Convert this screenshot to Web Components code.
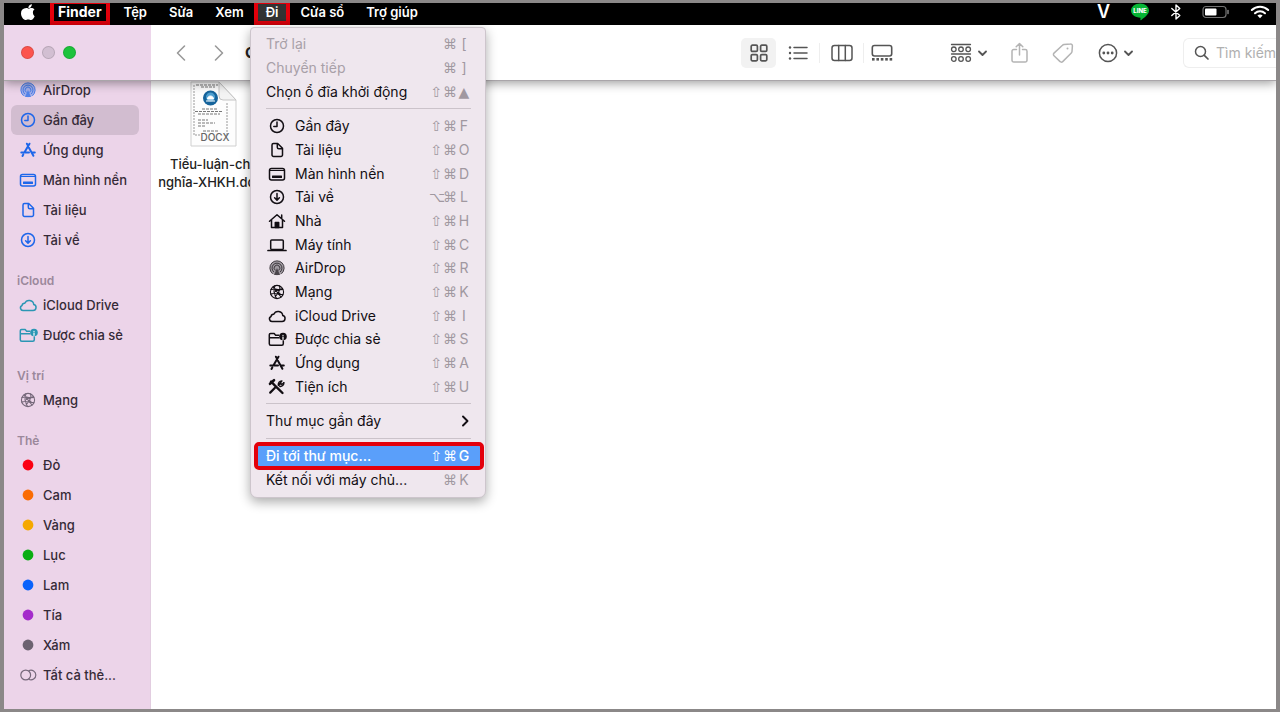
<!DOCTYPE html>
<html lang="vi">
<head>
<meta charset="utf-8">
<title>Finder</title>
<style>
body {
  margin: 0;
  font: 14px/18px Inter, "Noto Sans", sans-serif;
}
</style>
</head>
<body>
<finder-app></finder-app>

<script>
// every glyph is [width, height, markup], drawn with currentColor
const ICONS = {
    clock: [22, 18, '<circle cx="11" cy="9" r="6.500"/><path d="M11 5v4.500H7.800"/>'],
    doc: [22, 18, '<path d="M7.500 2.500h4.200l4.800 4.800v6.700a1.500 1.500 0 0 1-1.500 1.500H7.500A1.500 1.500 0 0 1 6 14V4a1.500 1.500 0 0 1 1.500-1.500zM11.300 2.700v3.500a1.500 1.500 0 0 0 1.500 1.500h3.500"/>'],
    desktop: [22, 18, '<rect x="3.500" y="3.500" width="15" height="11.500" rx="2"/><path d="M4 5.500h14" stroke-width="1"/><rect x="6" y="10.500" width="10" height="2.500" rx=".5" fill="currentColor" stroke="none"/>'],
    download: [22, 18, '<circle cx="11" cy="9" r="6.500"/><path d="M11 5.500v6.500M8.600 9.700L11 12.100l2.400-2.400"/>'],
    house: [22, 18, '<path d="M3.500 9.200L11 2.700l7.500 6.500M5.500 8v7.500h11V8M15.700 3v3.500"/><path d="M9.300 15.500v-5h3.400v5z" fill="currentColor"/>'],
    laptop: [22, 18, '<rect x="4.700" y="4" width="12.600" height="9.500" rx="1"/><path d="M2 14.500h18" stroke-width="1.700"/>'],
    airdrop: [22, 18, '<circle cx="11" cy="9" r="7.300" fill="currentColor" fill-opacity=".35" stroke="none"/><g stroke-width="1" stroke-opacity=".7"><path d="M6.200 14.400a7.200 7.200 0 1 1 9.600 0"/><path d="M7.600 12.800a5 5 0 1 1 6.800 0"/><path d="M9.100 11.200a2.900 2.900 0 1 1 3.800 0"/></g><path d="M11 9l3 7H8z" fill="currentColor" fill-opacity=".6" stroke="none"/>'],
    globe: [22, 18, '<g stroke-width="1.100"><circle cx="11" cy="9" r="6.600"/><path d="M5 6.500c3-1 6 .5 11.800 0M4.700 11c4-1.500 8 .500 12 .500M9 2.800c-2 4-.5 9 1.500 12.600M13.500 3c1.500 3-1 7-4.500 11M7 4l8 10M16.500 5.500l-7 3"/></g><circle cx="9.500" cy="6.500" r="1.100" fill="currentColor" stroke="none"/><circle cx="13.200" cy="10.800" r="1.200" fill="currentColor" stroke="none"/>'],
    cloud: [22, 18, '<path d="M6.300 14.500h9.700a3 3 0 0 0 .8-5.900 4.700 4.700 0 0 0-9-1.300 2.500 2.500 0 0 0-2.700 2.200 2.600 2.600 0 0 0 1.200 5z"/>'],
    shared: [22, 18, '<path d="M12.800 5.200H9.600L8.200 3.600H4.500A1.200 1.200 0 0 0 3.300 4.800v8.900a1.500 1.500 0 0 0 1.500 1.500h11a1.500 1.500 0 0 0 1.500-1.500v-2.600M3.500 7.700h9.300"/><circle cx="17" cy="6.500" r="3.800" fill="currentColor" stroke="none"/><path d="M17 5.400v.2M17 7v2.300" stroke="#fff" stroke-width="1.200"/>'],
    apps: [22, 18, '<g stroke-width="2"><path d="M9.900 2.700l1.300 2.300M12.500 2.700L7.500 11.300M11.900 6.800l4.500 8M4.300 11.600h7.700M14.900 11.600h2.900M6.300 13.600l-.8 1.400"/></g>'],
    tools: [22, 18, '<path d="M9 9.800l-4.800 4.800M12.700 7l1.500-1.600" stroke-width="2.200"/><path d="M17.800 4.700l-2 1.800-1.500-1.500 1.700-2.100a3.400 3.400 0 0 0-3.500 4.500" stroke-width="1.300"/><path d="M5 3.500L9 7.700l7.500 7.300" stroke-width="2.400"/><path d="M4 5.800l4-3.600" stroke-width="2.600"/><path d="M17.800 4.700a3.400 3.400 0 0 1-4 3.700"/>'],
    tags: [22, 18, '<g stroke-width="1.200"><circle cx="8.700" cy="9" r="4.900"/><path d="M12 4.500a4.900 4.900 0 1 1 0 9"/></g>'],
    dot: [22, 18, '<circle cx="11" cy="9" r="5.400" fill="currentColor" stroke="none"/>'],

    back: [12, 18, '<path d="M9.500 2L2.500 9l7 7" stroke-width="1.600"/>'],
    forward: [12, 18, '<path d="M2.500 2l7 7-7 7" stroke-width="1.600"/>'],
    more: [8, 12, '<path d="M2 1.500L6.500 6 2 10.500" stroke-width="1.900"/>'],
    down: [9, 18, '<path d="M1 7.500l3.500 3.500L8 7.500" stroke-width="1.800"/>'],
    grid: [18, 18, '<g stroke-width="1.700"><rect x="1.200" y="1.200" width="6.200" height="6.200" rx="1.200"/><rect x="10.600" y="1.200" width="6.200" height="6.200" rx="1.200"/><rect x="1.200" y="10.600" width="6.200" height="6.200" rx="1.200"/><rect x="10.600" y="10.600" width="6.200" height="6.200" rx="1.200"/></g>'],
    list: [20, 18, '<path d="M6 3.500h13M6 9h13M6 14.500h13" stroke-width="1.500"/><g fill="currentColor" stroke="none"><circle cx="2" cy="3.500" r="1.200"/><circle cx="2" cy="9" r="1.200"/><circle cx="2" cy="14.500" r="1.200"/></g>'],
    columns: [22, 18, '<rect x="1" y="1.500" width="20" height="15" rx="2.500"/><path d="M7.700 1.500v15M14.300 1.500v15"/>'],
    gallery: [22, 18, '<rect x="1.300" y="1.500" width="19.400" height="10.500" rx="2.200" stroke-width="1.600"/><g fill="currentColor" stroke="none"><rect x="1" y="14" width="2.600" height="2.600"/><rect x="5.400" y="14" width="2.600" height="2.600"/><rect x="9.800" y="14" width="2.600" height="2.600"/><rect x="14.200" y="14" width="2.600" height="2.600"/><rect x="18.600" y="14" width="2.600" height="2.600"/></g>'],
    group: [22, 20, '<g stroke-width="1.300"><path d="M1.500 1.500h19M1.500 11h19" stroke-width="1.300"/><circle cx="3.800" cy="6.300" r="2.300"/><circle cx="11" cy="6.300" r="2.300"/><circle cx="18.200" cy="6.300" r="2.300"/><circle cx="3.800" cy="16" r="2.300"/><circle cx="11" cy="16" r="2.300"/><circle cx="18.200" cy="16" r="2.300"/></g>'],
    share: [17, 22, '<path d="M5.500 7.500H2.700A1.700 1.700 0 0 0 1 9.200v9.100A1.700 1.700 0 0 0 2.700 20h11.600a1.700 1.700 0 0 0 1.700-1.700V9.200a1.700 1.700 0 0 0-1.700-1.700h-2.800M8.500 13V1.500M5.200 4.800l3.300-3.300 3.300 3.300"/>'],
    tag: [22, 22, '<path d="M12 2.600l6.400-.6a1.800 1.800 0 0 1 2 2L20 9.500a2.400 2.400 0 0 1-.7 1.500l-8.600 8.600a1.800 1.800 0 0 1-2.600 0L2 13.700a1.800 1.800 0 0 1 0-2.600l8.500-7.800A2.400 2.400 0 0 1 12 2.600z"/><circle cx="15.500" cy="6.500" r="1" fill="currentColor" stroke="none"/>'],
    ellipsis: [20, 20, '<circle cx="10" cy="10" r="8.600"/><g fill="currentColor" stroke="none"><circle cx="5.800" cy="10" r="1.400"/><circle cx="10" cy="10" r="1.400"/><circle cx="14.200" cy="10" r="1.400"/></g>'],
    search: [16, 16, '<circle cx="6.500" cy="6.500" r="5" stroke-width="1.500"/><path d="M10.300 10.300l3.700 3.700" stroke-width="1.700"/>'],

    apple: [16, 18, '<g fill="currentColor" stroke="none"><path d="M12.900 9.400c0-1.800 1.400-2.700 1.600-2.800-.9-1.300-2.300-1.500-2.800-1.500-1.200-.1-2.300.7-2.900.7s-1.500-.7-2.500-.7C3 5.200 1 7 1 10.300c0 3.200 2.300 6.700 4.400 6.700 1 0 1.500-.6 2.800-.6s1.700.6 2.800.6c1.600 0 3-2.200 3.700-4-.1 0-1.800-.8-1.800-3.600z"/><path d="M10.900 3.900c.6-.7 1-1.700.9-2.700-.9 0-1.900.6-2.500 1.300-.6.6-1 1.600-.9 2.500 1 .1 1.900-.5 2.500-1.100z"/></g>'],
    line: [20, 18, '<path d="M10 .5c5 0 9 3.200 9 7.100 0 3.700-4 6.600-7.600 9.300-.9.600-1.100.5-1-.4l.1-1.700C5 14.800 1 11.500 1 7.600S5 .5 10 .5z" fill="#06b535" stroke="none"/><text x="10" y="10" text-anchor="middle" fill="#fff" stroke="none" font-family="Inter, sans-serif" font-size="6" font-weight="800">LINE</text>'],
    bluetooth: [12, 18, '<path d="M1.800 5.500l8 7L6 16V2l3.800 3.500-8 7" stroke-width="1.400"/>'],
    battery: [28, 14, '<rect x="1" y="1.500" width="23" height="11" rx="3" stroke-opacity=".45" stroke-width="1.200"/><rect x="3" y="3.500" width="11.500" height="7" rx="1" fill="currentColor" stroke="none"/><path d="M26 5.500v3" stroke-opacity=".5"/>'],
    wifi: [20, 14, '<path d="M1.800 5a11.800 11.800 0 0 1 16.400 0M5 8.200a7.200 7.200 0 0 1 10 0" stroke-width="2"/><path d="M7.400 10.500a4 4 0 0 1 5.200 0L10 13.200z" fill="currentColor" stroke="none"/>'],
}

class Base extends HTMLElement {
    connectedCallback() {
        if (this.shadowRoot) return
        this.attachShadow({mode: 'open'}).innerHTML = this.render()
    }
    attr(name) { return this.getAttribute(name) || '' }
}

customElements.define('ui-icon', class extends Base {
    render() {
        let [w, h, body] = ICONS[this.attr('name')]
        return `
<style>
:host { display: block; flex: none; }
svg { display: block; }
</style>
<svg width="${w}" height="${h}" viewBox="0 0 ${w} ${h}" fill="none" stroke="currentColor"
  stroke-width="1.5" stroke-linecap="round" stroke-linejoin="round" aria-hidden="true">${body}</svg>`
    }
})

customElements.define('menu-bar', class extends Base {
    render() {
        let items = ['Finder', 'Tệp', 'Sửa', 'Xem', 'Đi', 'Cửa sổ', 'Trợ giúp']
        let marks = {'Finder': 'app marked', 'Đi': 'open marked'}
        return `
<style>
:host {
  display: flex;
  justify-content: space-between;
  height: 22px;
  padding: 0 6px 0 16px;
  background: #000;
  color: #fff;
}
nav, .status {
  display: flex;
  gap: 22px;
  height: 18px;
  align-items: center;
}
.status { gap: 20px; }
button {
  position: relative;
  padding: 0;
  border: 0;
  background: none;
  color: inherit;
  font: inherit;
  font-size: 13px;
  font-weight: 600;
  line-height: 18px;
}
.app { font-size: 14px; font-weight: 700; }
.marked::after {
  content: "";
  position: absolute;
  inset: 0 -8px -4px;
  border: solid #e3000b;
  border-width: 1px 4px 4px;
}
.open::after {
  inset: 0 -12px -4px;
  background: #fff3;
}
.v { font-size: 18px; font-weight: 600; }
</style>
<nav>
  <ui-icon name="apple"></ui-icon>
  ${items.map(t => `<button class="${marks[t] || ''}">${t}</button>`).join('')}
</nav>
<div class="status">
  <span class="v">V</span>
  <ui-icon name="line"></ui-icon>
  <ui-icon name="bluetooth"></ui-icon>
  <ui-icon name="battery"></ui-icon>
  <ui-icon name="wifi"></ui-icon>
</div>`
    }
})

customElements.define('menu-item', class extends Base {
    render() {
        let icon = this.attr('icon')
        let keys = [...this.attr('keys')]
        let kind = k => /[A-Z[\]]/.test(k) ? '' : 'sym'
        return `
<style>
:host { display: block; }
button {
  display: flex;
  align-items: center;
  width: 100%;
  height: 20px;
  padding: 0 9px 0 8px;
  border: 0;
  background: none;
  color: #120e13;
  font: inherit;
  text-align: left;
}
ui-icon { margin-right: 7px; }
.label { flex: 1; white-space: nowrap; }
.keys { display: flex; color: #a098a0; }
kbd {
  width: 14px;
  font: inherit;
  text-align: center;
}
.sym { font-family: "DejaVu Sans", sans-serif; }
.arrow { margin: 0 2px 0 0; }
:host([disabled]) button { color: #a8a0a8; }
:host([active]) button {
  background: #5a9ffa;
  color: #fff;
  font-weight: 500;
  outline: 4px solid #e3000b;
  border-radius: 1px;
}
:host([active]) .keys { color: #fff; }
</style>
<button role="menuitem" ${this.hasAttribute('disabled') ? 'disabled' : ''}>
  ${icon ? `<ui-icon name="${icon}"></ui-icon>` : ''}
  <span class="label"><slot></slot></span>
  ${this.hasAttribute('submenu') ? '<ui-icon class="arrow" name="more"></ui-icon>' : ''}
  <span class="keys">${keys.map(k => `<kbd class="${kind(k)}">${k}</kbd>`).join('')}</span>
</button>`
    }
})

customElements.define('go-menu', class extends Base {
    render() {
        let places = [
            ['clock', 'Gần đây', '⇧⌘F'],
            ['doc', 'Tài liệu', '⇧⌘O'],
            ['desktop', 'Màn hình nền', '⇧⌘D'],
            ['download', 'Tải về', '⌥⌘L'],
            ['house', 'Nhà', '⇧⌘H'],
            ['laptop', 'Máy tính', '⇧⌘C'],
            ['airdrop', 'AirDrop', '⇧⌘R'],
            ['globe', 'Mạng', '⇧⌘K'],
            ['cloud', 'iCloud Drive', '⇧⌘I'],
            ['shared', 'Được chia sẻ', '⇧⌘S'],
            ['apps', 'Ứng dụng', '⇧⌘A'],
            ['tools', 'Tiện ích', '⇧⌘U'],
        ]
        return `
<style>
:host {
  display: block;
  box-sizing: border-box;
  width: 236px;
  padding: 4px 5px 5px 7px;
  background: #efe7ee;
  border: 1px solid #cdc5cc;
  border-radius: 4px 4px 7px 7px;
  box-shadow: 0 4px 12px #0005;
}
section {
  display: grid;
  grid-auto-rows: 24px 24px 23px;
  align-items: center;
}
hr {
  margin: 5px 9px 5px 8px;
  border: 0;
  border-top: 1px solid #cbc3ca;
}
</style>
<section>
  <menu-item keys="⌘[" disabled>Trở lại</menu-item>
  <menu-item keys="⌘]" disabled>Chuyển tiếp</menu-item>
  <menu-item keys="⇧⌘▲">Chọn ổ đĩa khởi động</menu-item>
</section>
<hr>
<section>
  ${places.map(([i, t, k]) => `<menu-item icon="${i}" keys="${k}">${t}</menu-item>`).join('')}
</section>
<hr>
<section><menu-item submenu>Thư mục gần đây</menu-item></section>
<hr>
<section>
  <menu-item keys="⇧⌘G" active>Đi tới thư mục...</menu-item>
  <menu-item keys="⌘K">Kết nối với máy chủ...</menu-item>
</section>`
    }
})

customElements.define('finder-toolbar', class extends Base {
    render() {
        return `
<style>
:host {
  display: flex;
  align-items: center;
  position: relative;
  height: 55px;
  background: #fff;
  border-bottom: 1px solid #a9a5a9;
  box-shadow: 0 2px 10px #0006;
  color: #555;
}
button {
  display: flex;
  align-items: center;
  justify-content: center;
  gap: 6px;
  padding: 0;
  border: 0;
  background: none;
  color: inherit;
}
.lights {
  display: flex;
  align-items: center;
  gap: 8px;
  box-sizing: border-box;
  width: var(--side);
  height: 100%;
  padding-left: 17px;
  background: #edd6eb;
}
.lights button {
  width: 13px;
  height: 13px;
  border-radius: 50%;
  background: #d2bfd2;
  box-shadow: inset 0 0 0 1px #0002;
}
.lights .close { background: #fc544e; }
.lights .zoom { background: #1cc33c; }
.nav {
  display: flex;
  align-items: center;
  gap: 26px;
  padding-left: 24px;
  color: #9a9a9a;
}
h1 {
  margin: 0 auto 0 20px;
  color: #222;
  font-size: 15px;
  font-weight: 700;
}
.views {
  display: flex;
  align-items: center;
  gap: 4px;
  margin-right: 54px;
}
.views button { width: 35px; height: 30px; border-radius: 5px; }
.views .on { background: #f2f2f2; }
.views .last { width: 28px; }
.views i { width: 1px; height: 20px; background: #eee; }
.actions { display: flex; align-items: center; gap: 24px; }
.dim { color: #b4b4b4; }
.search {
  display: flex;
  align-items: center;
  gap: 6px;
  box-sizing: border-box;
  width: 93px;
  height: 30px;
  margin-left: 50px;
  padding-left: 10px;
  border: 1px solid #eee;
  border-right: 0;
  border-radius: 6px 0 0 6px;
}
input {
  flex: 1;
  min-width: 0;
  padding: 0;
  border: 0;
  outline: 0;
  background: none;
  font: inherit;
}
input::placeholder { color: #b0b0b0; }
</style>
<div class="lights">
  <button class="close" aria-label="Đóng"></button>
  <button aria-label="Thu nhỏ"></button>
  <button class="zoom" aria-label="Phóng to"></button>
</div>
<div class="nav">
  <button aria-label="Trở lại"><ui-icon name="back"></ui-icon></button>
  <button aria-label="Chuyển tiếp"><ui-icon name="forward"></ui-icon></button>
</div>
<h1>G</h1>
<div class="views">
  <button class="on" aria-label="Biểu tượng"><ui-icon name="grid"></ui-icon></button>
  <button aria-label="Danh sách"><ui-icon name="list"></ui-icon></button>
  <i></i>
  <button aria-label="Cột"><ui-icon name="columns"></ui-icon></button>
  <i></i>
  <button class="last" aria-label="Bộ sưu tập"><ui-icon name="gallery"></ui-icon></button>
</div>
<div class="actions">
  <button aria-label="Nhóm"><ui-icon name="group"></ui-icon><ui-icon name="down"></ui-icon></button>
  <button class="dim" aria-label="Chia sẻ"><ui-icon name="share"></ui-icon></button>
  <button class="dim" aria-label="Gắn thẻ"><ui-icon name="tag"></ui-icon></button>
  <button aria-label="Thao tác"><ui-icon name="ellipsis"></ui-icon><ui-icon name="down"></ui-icon></button>
</div>
<label class="search">
  <ui-icon name="search"></ui-icon>
  <input type="text" placeholder="Tìm kiếm" aria-label="Tìm kiếm">
</label>`
    }
})

customElements.define('side-item', class extends Base {
    render() {
        return `
<style>
:host {
  display: block;
  --tint: #1d66ea;
}
a {
  display: flex;
  align-items: center;
  gap: 4px;
  height: 30px;
  padding-left: 6px;
  border-radius: 6px;
  color: #352a37;
  text-decoration: none;
  white-space: nowrap;
}
ui-icon { color: ${this.attr('color') || 'var(--tint)'}; }
:host([selected]) a { background: #d2bdd0; }
</style>
<a href="#"><ui-icon name="${this.attr('icon')}"></ui-icon><slot></slot></a>`
    }
})

customElements.define('side-bar', class extends Base {
    render() {
        let teal = '#2b96b4', gray = '#75687a'
        let sections = [
            ['', [
                ['airdrop', 'AirDrop'],
                ['clock', 'Gần đây'],
                ['apps', 'Ứng dụng'],
                ['desktop', 'Màn hình nền'],
                ['doc', 'Tài liệu'],
                ['download', 'Tải về'],
            ]],
            ['iCloud', [
                ['cloud', 'iCloud Drive', teal],
                ['shared', 'Được chia sẻ', teal],
            ]],
            ['Vị trí', [['globe', 'Mạng', gray]]],
            ['Thẻ', [
                ['dot', 'Đỏ', '#fb0012'],
                ['dot', 'Cam', '#fa6c04'],
                ['dot', 'Vàng', '#f5a800'],
                ['dot', 'Lục', '#0aad12'],
                ['dot', 'Lam', '#0a62fb'],
                ['dot', 'Tía', '#a42bcb'],
                ['dot', 'Xám', '#6c6270'],
                ['tags', 'Tất cả thẻ...', gray],
            ]],
        ]
        let item = ([i, t, c]) =>
            `<side-item icon="${i}" color="${c || ''}" ${t == 'Gần đây' ? 'selected' : ''}>${t}</side-item>`
        return `
<style>
:host {
  display: block;
  box-sizing: border-box;
  width: var(--side);
  padding: 0 11px 0 7px;
  background: #ecd4e9;
  border-right: 1px solid #e2cde0;
  font-size: 13px;
  font-weight: 500;
  overflow: hidden;
}
/* list is scrolled a little under the toolbar */
nav { margin-top: -6px; }
h2 {
  margin: 17px 0 0 6px;
  color: #9b889b;
  font-size: 12px;
  font-weight: 600;
  line-height: 18px;
}
</style>
<nav>
  ${sections.map(([h, rows]) => (h ? `<h2>${h}</h2>` : '') + rows.map(item).join('')).join('')}
</nav>`
    }
})

customElements.define('file-tile', class extends Base {
    render() {
        return `
<style>
:host {
  display: block;
  width: 126px;
  color: #222;
  font-size: 13px;
  font-weight: 500;
  text-align: center;
}
svg { display: block; margin: 0 auto 6px; }
</style>
<svg width="50" height="68" viewBox="0 0 50 68" aria-hidden="true">
  <path d="M2 1h28l17 18v46H2z" fill="#fdfdfd" stroke="#cfcfcf"/>
  <path d="M30 1v14a4 4 0 0 0 4 4h13z" fill="#f3f3f3" stroke="#c4c4c4"/>
  <path d="M5 4v50h6M38 22v32" fill="none" stroke="#999" stroke-dasharray="2 1"/>
  <path d="M7 4h22M12 6h14M13 28h16M6 30.500h27M9 33h22M9 39h10M9 42h17M9 45h8M14 50h15" stroke="#777" stroke-dasharray="3 1"/>
  <circle cx="21.500" cy="17" r="7.500" fill="#15639b"/>
  <circle cx="21.500" cy="16" r="4.500" fill="#4d9fd0"/>
  <path d="M18.500 18c0-4 6-4 6 0zM17 20h9" fill="#fff" stroke="#fff"/>
  <text x="26" y="60" text-anchor="middle" font-family="Inter, sans-serif" font-size="10" font-weight="500" fill="#666">DOCX</text>
</svg>
<slot></slot>`
    }
})

customElements.define('finder-app', class extends Base {
    render() {
        return `
<style>
:host {
  --side: 147px;
  display: flex;
  flex-direction: column;
  position: relative;
  box-sizing: border-box;
  min-height: 100vh;
  border: solid #8b8888;
  border-width: 3px 4px;
  background: #fff;
  overflow: hidden;
}
menu-bar { flex: none; }
finder-toolbar { flex: none; z-index: 1; }
main { flex: 1; display: flex; }
.files { flex: 1; }
go-menu {
  position: absolute;
  left: 246px;
  top: 24px;
  z-index: 2;
}
</style>
<menu-bar></menu-bar>
<finder-toolbar></finder-toolbar>
<main>
  <side-bar></side-bar>
  <div class="files"><file-tile>Tiểu-luận-chủ nghĩa-XHKH.docx</file-tile></div>
</main>
<go-menu></go-menu>`
    }
})
</script>
</body>
</html>
